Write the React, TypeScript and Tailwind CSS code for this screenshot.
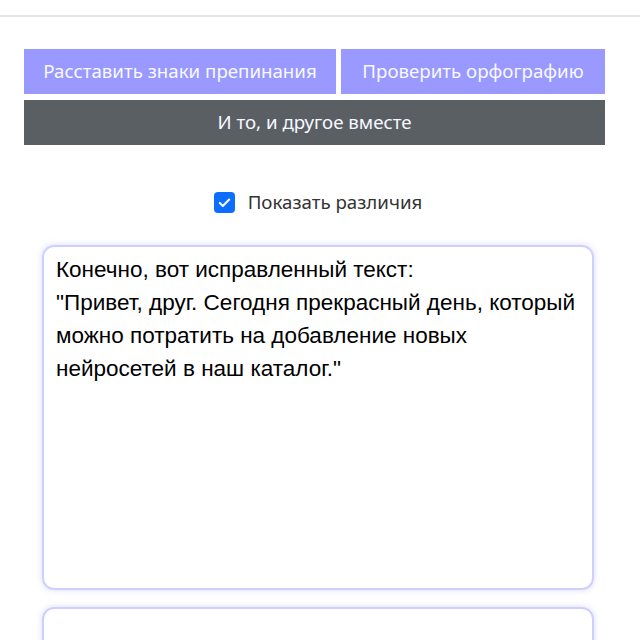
const App = () => {
  return (
    <div className="w-[640px] h-[640px] overflow-hidden bg-white">
      {/* Top bar */}
      <div className="h-[17px] border-b-2 border-[#e6e6e6]" />

      {/* Action buttons */}
      <div className="mt-[32px] ml-[24px] w-[581px] flex flex-col gap-[6px] font-['Noto_Sans',sans-serif]">
        <div className="flex gap-[5px]">
          <button className="w-[312px] h-[45px] bg-[#9999ff] text-[#f8f8ff] text-[18.7px]">
            Расставить знаки препинания
          </button>
          <button className="flex-1 h-[45px] bg-[#9999ff] text-[#f8f8ff] text-[18.7px]">
            Проверить орфографию
          </button>
        </div>
        <button className="w-full h-[45px] bg-[#5a5f64] text-[#f8f8ff] text-[18.7px]">
          И то, и другое вместе
        </button>
      </div>

      {/* Diff toggle */}
      <div className="mt-[45px] w-[636px] h-[24px] flex justify-center items-center gap-[13px] font-['Noto_Sans',sans-serif]">
        <span className="w-[21px] h-[21px] rounded-[4px] bg-[#0d6efd] flex items-center justify-center">
          <svg width="15" height="15" viewBox="0 0 16 16" fill="none">
            <path d="M3 8.5l3.2 3.2L13 4.8" stroke="white" strokeWidth="2.2" strokeLinecap="round" strokeLinejoin="round" />
          </svg>
        </span>
        <span className="text-[18.7px] text-[#333]">Показать различия</span>
      </div>

      {/* Result boxes */}
      <div className="mt-[31px] ml-[42px] w-[552px] flex flex-col gap-[17px]">
        <div className="h-[345px] rounded-[12px] border-2 border-[#cfcfff] shadow-[0_0_6px_rgba(153,153,255,0.35)] px-[12px] pt-[6px] font-['Liberation_Sans',Arial,sans-serif] text-[22.5px] leading-[33px] text-black">
          Конечно, вот исправленный текст:
          <br />
          "Привет, друг. Сегодня прекрасный день, который можно потратить на добавление новых нейросетей в наш каталог."
        </div>
        <div className="h-[100px] rounded-[12px] border-2 border-[#cfcfff] shadow-[0_0_6px_rgba(153,153,255,0.35)]" />
      </div>
    </div>
  );
};

export default App;
